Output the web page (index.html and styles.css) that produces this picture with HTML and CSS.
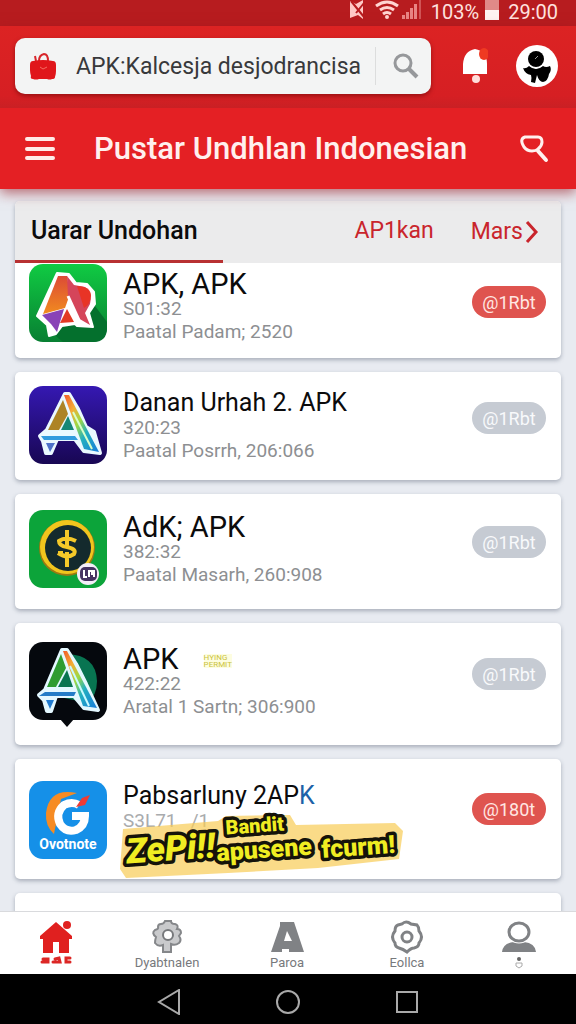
FILE: index.html
```html
<!DOCTYPE html>
<html lang="id">
<head>
    <meta charset="UTF-8">
    <meta name="viewport" content="width=device-width, initial-scale=1.0">
    <title>Pustar Undhlan Indonesian</title>
    <link rel="stylesheet" href="styles.css">
</head>
<body>
<div class="status-bar">
    <svg width="18" height="20" viewBox="0 0 18 20">
        <path d="M2 1l6 3 7-4v19l-5-4-8 3z" fill="#ffc9c6"/>
        <path d="M3 1l13 16M8 13l8-10" stroke="#b71c1f" stroke-width="2"/>
    </svg>
    <svg width="24" height="20" viewBox="0 0 24 20" fill="none" stroke="#ffd5d2" stroke-width="3">
        <path d="M1 6q11-8 22 0M5 10q7-5 14 0M8 14q4-3 8 0"/>
        <circle cx="12" cy="17" r="1" stroke-width="2"/>
    </svg>
    <svg class="signal" width="20" height="20" viewBox="0 0 20 20" fill="#e88584">
        <path d="M0 15h3v4H0zM4 12h3v7H4zM8 8h3v11H8zM12 4h3v15h-3z"/>
        <path d="M17 0h2v19h-2z" fill="#d05556"/>
    </svg>
    <span class="battery-text">103%</span>
    <svg class="battery" width="14" height="20" viewBox="0 0 14 20">
        <path d="M0 0h14v10H0z" fill="#e08a88"/>
        <path d="M0 10h14v10H0z" fill="#fff3f1"/>
    </svg>
    <span>29:00</span>
</div>

<header>
    <div class="search-row">
        <form class="search-box">
            <svg width="28" height="28" viewBox="0 0 28 28">
                <path d="M10 9q0-6 5-7 4 0 4 7M6 4l1 5" fill="none" stroke="#d8262b" stroke-width="2"/>
                <path d="M4 9q10-2 20 0 3 0 3 4v6q0 3-1 6 0 2-3 2-2 1-5 0h-8q-3 1-6 0-3 0-2-3-1-3-1-6v-5q0-4 3-4z" fill="#e0161b"/>
                <path d="M11 15l3 2 4-2" fill="none" stroke="#f46a60"/>
            </svg>
            <input type="text" aria-label="Cari aplikasi" value="APK:Kalcesja desjodrancisa">
            <button type="submit" aria-label="Cari">
                <svg width="28" height="28" viewBox="0 0 28 28" fill="none" stroke="#96989b">
                    <circle cx="11" cy="11" r="8" stroke-width="3"/>
                    <path d="M17 17l8 8" stroke-width="4"/>
                </svg>
            </button>
        </form>
        <button class="bell" aria-label="Notifikasi">
            <svg width="26" height="38" viewBox="0 0 26 38">
                <path d="M1 27V17Q2 4 13 2q12 2 12 15v10z" fill="#fff"/>
                <ellipse cx="22" cy="7" rx="5" ry="6" fill="#ef3a22"/>
                <circle cx="14" cy="32" r="4" fill="#ffdedb"/>
            </svg>
        </button>
        <button class="avatar" aria-label="Profil">
            <svg width="42" height="42" viewBox="0 0 42 42">
                <circle cx="20" cy="14" r="8"/>
                <path d="M13 21q7 6 14 0 3 2 7 0 2 4-1 8-1 7-6 8-4 0-6-7l-2 8-4-1q1-4 0-7-6-1-8-7 3 1 6-2z"/>
                <path d="M13 20q7 6 14 0" fill="none" stroke="#fff"/>
                <path d="M19 14l3-3" stroke="#999"/>
            </svg>
        </button>
    </div>
    <div class="app-bar">
        <button aria-label="Menu">
            <svg width="32" height="26" viewBox="0 0 32 26" stroke="#ffebe8" stroke-width="4" stroke-linecap="round">
                <path d="M3 3h26M3 13h26M3 22h26"/>
            </svg>
        </button>
        <h1>Pustar Undhlan Indonesian</h1>
        <button aria-label="Cari">
            <svg width="30" height="28" viewBox="0 0 30 28" fill="none" stroke="#fff0ee" stroke-width="3">
                <path d="M6 2h13q4 0 4 5 0 4-4 7-2 2-6 2-5 0-8-4Q0 4 6 2z"/>
                <path d="M19 16l8 9" stroke-width="4" stroke-linecap="round"/>
            </svg>
        </button>
    </div>
</header>

<main>
    <section class="card">
        <nav class="tabs">
            <a href="#" class="active">Uarar Undohan</a>
            <a href="#">AP1kan</a>
            <a href="#" class="more">Mars
                <svg width="14" height="24" viewBox="0 0 14 24" fill="none" stroke="#c9252c" stroke-width="3">
                    <path d="M2 2l9 10-9 10"/>
                </svg>
            </a>
        </nav>
        <div class="row first">
            <svg class="app-icon" viewBox="0 0 78 78">
                <defs>
                    <linearGradient id="green" x2="0" y2="1"><stop stop-color="#10cb43"/><stop offset="1" stop-color="#087f32"/></linearGradient>
                    <linearGradient id="orange" x2="0" y2="1"><stop stop-color="#dc4b35"/><stop offset="1" stop-color="#f18b1f"/></linearGradient>
                </defs>
                <rect width="78" height="78" rx="14" fill="url(#green)"/>
                <path d="M63 38l15 20v6q0 14-14 14H34L22 68z" fill="#04702d"/>
                <path d="M28 9l12 1 7 9 11 1 7 8 1 12-6 9 4 14-16-1-2-2-13 2-6 8-7 2-2-11L8 52z" fill="#fff" stroke="#fff" stroke-width="2" stroke-linejoin="round"/>
                <path d="M29 12h9l3 18-5 14-22 6z" fill="url(#orange)"/>
                <path d="M38 12l7 9 11 2q8 7 5 17l-5 9 5 12-12-7-10-21z" fill="#d5455a"/>
                <path d="M48 22q14 0 14 10-1 9-7 12z" fill="#e83426"/>
                <path d="M13 51l22-6-7 23-6-8z" fill="#8942b7"/>
                <path d="M38 45l7 13-14 1z" fill="#e23a25"/>
                <path d="M39 32l11 24" stroke="#fff" stroke-width="3"/>
            </svg>
            <div class="info">
                <h2>APK, APK</h2>
                <p>S01:32</p>
                <p class="meta">Paatal Padam; 2520</p>
            </div>
            <button class="price hot">@1Rbt</button>
        </div>
    </section>

    <section class="card">
        <div class="row">
            <svg class="app-icon" viewBox="0 0 78 78">
                <defs>
                    <linearGradient id="violet" x2="0" y2="1"><stop stop-color="#3518b2"/><stop offset="1" stop-color="#180753"/></linearGradient>
                    <linearGradient id="rainbow" x2="1" y2="1"><stop stop-color="#f15a2a"/><stop offset=".25" stop-color="#f5ad35"/><stop offset=".45" stop-color="#9ed943"/><stop offset=".65" stop-color="#23afc0"/><stop offset="1" stop-color="#187bda"/></linearGradient>
                </defs>
                <rect width="78" height="78" rx="14" fill="url(#violet)"/>
                <path d="M36 8h4l9 15 8 18 8 5 6 21-16-2-9-12H28l-6 14h-5l-3-12-3-5 7-6z" fill="#eaf9ff" stroke="#eaf9ff" stroke-width="4" stroke-linejoin="round"/>
                <path d="M34 14l5 14-9 16H19z" fill="#ad8425"/>
                <path d="M39 30l6 14H32z" fill="#168776"/>
                <path d="M35 9h5l10 19 20 38-15-3z" fill="url(#rainbow)"/>
                <path d="M12 50h34l3 4H15z" fill="#319cde"/>
                <path d="M17 57h9l-5 9z" fill="#4d72c9"/>
                <path d="M44 26l19 37" stroke="#d8ffca" stroke-width="2"/>
            </svg>
            <div class="info">
                <h2 class="long">Danan Urhah 2. APK</h2>
                <p>320:23</p>
                <p class="meta">Paatal Posrrh, 206:066</p>
            </div>
            <button class="price">@1Rbt</button>
        </div>
    </section>

    <section class="card">
        <div class="row tall">
            <svg class="app-icon" viewBox="0 0 78 78">
                <rect width="78" height="78" rx="14" fill="#0ca43a"/>
                <circle cx="38" cy="38" r="28" fill="#9b7912"/>
                <circle cx="38" cy="37" r="27" fill="#f1c51d"/>
                <circle cx="39" cy="38" r="23" fill="#142a2d"/>
                <path d="M47 31q-10-5-17 0 0 5 8 6 10 2 7 7-7 5-16-1M38 20v17M38 42v15" fill="none" stroke="#f4c929" stroke-width="4"/>
                <path d="M29 43h5" stroke="#f4c929" stroke-width="4"/>
                <circle cx="59" cy="64" r="11" fill="#f4eef8"/>
                <rect x="51" y="57" width="17" height="14" rx="5" fill="#463361"/>
                <path d="M55 60v7h3M60 67v-6h5v6M63 61v4" fill="none" stroke="#fff" stroke-width="2"/>
            </svg>
            <div class="info">
                <h2>AdK; APK</h2>
                <p>382:32</p>
                <p class="meta">Paatal Masarh, 260:908</p>
            </div>
            <button class="price">@1Rbt</button>
        </div>
    </section>

    <section class="card">
        <div class="row taller">
            <svg class="app-icon" viewBox="0 0 78 78">
                <rect width="78" height="78" rx="14" fill="#05080d"/>
                <path d="M31 77h14l-7 8z" fill="#05080d"/>
                <path d="M38 12q29 1 30 27 0 15-10 22L31 55z" fill="#087451"/>
                <path d="M33 8h5l9 14 10 20 12 26-14-2-10-12H27l-5 15h-4l-3-11-5-5 6-5z" fill="#e4f8ff" stroke="#e4f8ff" stroke-width="4" stroke-linejoin="round"/>
                <path d="M32 12l5 14-10 19h-9z" fill="#2e9c31"/>
                <path d="M38 28l6 17H29z" fill="#087451"/>
                <path d="M34 9h4l10 19 20 38-14-2z" fill="url(#rainbow)"/>
                <path d="M10 54h35l2-4H16z" fill="#247cc7"/>
                <path d="M17 58h8l-4 9z" fill="#227bcf"/>
                <path d="M41 24l19 40" stroke="#c9faff" stroke-width="2"/>
            </svg>
            <div class="info">
                <h2>APK <span class="tag">HYING<br>PERMIT</span></h2>
                <p>422:22</p>
                <p class="meta">Aratal 1 Sartn; 306:900</p>
            </div>
            <button class="price">@1Rbt</button>
        </div>
    </section>

    <section class="card">
        <div class="row promo">
            <svg class="app-icon" viewBox="0 0 78 78">
                <rect width="78" height="78" rx="14" fill="#1590e8"/>
                <path d="M48 12Q20 6 17 32q-1 13 8 21l7-35z" fill="#f68b23"/>
                <path d="M50 24q-7-4-15 0-9 8-4 19 6 9 16 6 9-4 9-14H43" fill="none" stroke="#fff" stroke-width="8"/>
                <path d="M47 26l6-9 8-3-5 10z" fill="#ee3b35"/>
                <text x="39" y="68" class="icon-text">Ovotnote</text>
            </svg>
            <div class="info">
                <h2 class="long">Pabsarluny 2AP<span class="blue">K</span></h2>
                <p class="faded">S3L71 &nbsp; /1</p>
            </div>
            <button class="price hot">@180t</button>
            <svg class="sticker" width="290" height="70" viewBox="0 0 290 70">
                <path d="M5 18l95-8 8-5 64-1 6 10 99-2 8 8-4 28-81 9-90 5-102 5-6-9z" fill="#f8cc55" opacity=".7"/>
                <g transform="rotate(-4 145 35)">
                    <text x="8" y="43" class="big">ZePi!!</text>
                    <text x="109" y="21" class="small">Bandit</text>
                    <text x="98" y="47" class="mid">apusene</text>
                    <text x="203" y="51" class="mid">fcurm!</text>
                </g>
            </svg>
        </div>
    </section>

    <section class="card next"></section>
</main>

<nav class="bottom-nav">
    <a href="#" aria-label="Beranda">
        <svg width="34" height="34" viewBox="0 0 34 34" fill="#e0201f">
            <path d="M17 2L1 16v3h3v14h10V22h6v11h10V19h3v-3z"/>
            <circle cx="28" cy="5" r="4"/>
        </svg>
        <svg width="32" height="10" viewBox="0 0 32 10" fill="none" stroke="#dc2725" stroke-width="3" stroke-linecap="round">
            <path d="M2 7h6V4H3M13 7h7l-1-4-4 1M30 3h-4v4h4"/>
        </svg>
    </a>
    <a href="#">
        <svg width="34" height="34" viewBox="0 0 34 34">
            <path d="M11 4q3 0 4-3h6q0 3 4 3 4 1 2 5 4 0 4 4l-2 3q3 4 0 7-4 3-8 1v8H13v-7q-5 2-8-2 0-3 1-6-5-4-1-7 4-1 3-3 0-3 3-3z" fill="#c9cacc" stroke="#85878a" stroke-width="2"/>
            <circle cx="18" cy="15" r="5" fill="#fff" stroke="#77797c" stroke-width="2"/>
        </svg>
        Dyabtnalen
    </a>
    <a href="#">
        <svg width="34" height="34" viewBox="0 0 34 34">
            <path d="M10 2h14l10 30H19v-3h-7v3H1L10 6z" fill="#808285"/>
            <path d="M17 11l5 10h-8z" fill="#fff"/>
        </svg>
        Paroa
    </a>
    <a href="#">
        <svg width="34" height="34" viewBox="0 0 34 34" fill="none" stroke="#808285" stroke-width="3">
            <path d="M12 4q4-4 9 0l6 1q2 2 2 6 5 6 0 12 0 4-5 5-3 0-7 4-4-3-8-4-4-1-4-5-5-6 0-12 0-5 3-6z"/>
            <circle cx="17" cy="17" r="5"/>
        </svg>
        Eollca
    </a>
    <a href="#" aria-label="Akun">
        <svg width="36" height="34" viewBox="0 0 36 34">
            <path d="M1 32q1-9 12-10h10q11 1 12 10z" fill="#808285"/>
            <ellipse cx="18" cy="12" rx="11" ry="10" fill="#fff" stroke="#fff" stroke-width="3"/>
            <ellipse cx="18" cy="12" rx="10" ry="9" fill="#fff" stroke="#808285" stroke-width="3"/>
        </svg>
        <svg width="12" height="14" viewBox="0 0 12 14">
            <circle cx="6" cy="4" r="2" fill="#666"/>
            <path d="M3 8h6v3l-3 2-3-2z" fill="none" stroke="#aaa"/>
        </svg>
    </a>
</nav>

<div class="system-nav">
    <button aria-label="Kembali">
        <svg width="24" height="26" viewBox="0 0 24 26"><path d="M22 1v24L2 13z"/></svg>
    </button>
    <button aria-label="Layar utama">
        <svg width="24" height="26" viewBox="0 0 24 26"><circle cx="12" cy="13" r="11"/></svg>
    </button>
    <button aria-label="Aplikasi terbaru">
        <svg width="24" height="26" viewBox="0 0 24 26"><path d="M2 3h20v20H2z"/></svg>
    </button>
</div>
</body>
</html>
```
FILE: styles.css
```css
* {
    box-sizing: border-box;
}

body {
    display: flex;
    flex-direction: column;
    height: 100vh;
    margin: 0;
    font-family: Roboto, Arial, sans-serif;
    color: #0b0b0c;
    background: #e8ebf1;
    overflow: hidden;
}

h1, h2, p {
    margin: 0;
    font-weight: 400;
}

a {
    color: inherit;
    text-decoration: none;
}

button {
    flex: none;
    padding: 0;
    border: 0;
    background: none;
    font-family: inherit;
}

svg {
    display: block;
    flex: none;
}

.status-bar {
    display: flex;
    align-items: flex-start;
    height: 26px;
    padding-right: 18px;
    justify-content: flex-end;
    gap: 9px;
    color: #ffe2df;
    background: #b71c1f;
    font-size: 20px;
    line-height: 24px;
}

.status-bar .signal {
    margin-left: -6px;
}

.status-bar .battery {
    margin-left: -3px;
}

header {
    position: relative;
    background: #e42024;
    box-shadow: 0 4px 12px rgba(150, 20, 30, 0.6);
}

.search-row {
    display: flex;
    align-items: center;
    height: 82px;
    padding: 0 18px 2px 15px;
    background: linear-gradient(#dc2323 0, #d61f23 85%, #c92024 100%);
}

.search-box {
    display: flex;
    flex: 1;
    align-items: center;
    min-width: 0;
    height: 56px;
    padding-left: 14px;
    border-radius: 10px;
    background: #f3f4f4;
    box-shadow: 0 2px 4px rgba(90, 0, 0, 0.5);
}

.search-box input {
    flex: 1;
    min-width: 0;
    padding: 0;
    margin-left: 19px;
    border: 0;
    outline: 0;
    background: none;
    color: #38393b;
    font-family: inherit;
    font-size: 23px;
}

.search-box button {
    display: flex;
    width: 56px;
    height: 38px;
    padding-left: 16px;
    align-items: center;
    border-left: 1px solid #dcdddd;
}

.bell {
    margin: 0 28px 0 31px;
}

.avatar {
    width: 42px;
    height: 42px;
    border-radius: 50%;
    background: #fff;
}

.app-bar {
    display: flex;
    align-items: center;
    height: 81px;
    padding: 0 27px 0 24px;
}

.app-bar h1 {
    flex: 1;
    margin-left: 38px;
    color: #fff0ee;
    font-size: 31px;
    font-weight: 500;
    line-height: 40px;
    white-space: nowrap;
}

main {
    display: flex;
    flex: 1;
    flex-direction: column;
    gap: 14px;
    min-height: 0;
    padding: 12px 15px 0;
    overflow: hidden;
}

.card {
    flex: none;
    border-radius: 5px;
    background: #fff;
    box-shadow: 0 2px 4px rgba(70, 80, 100, 0.4);
}

.next {
    height: 40px;
}

.tabs {
    display: flex;
    height: 62px;
    border-radius: 5px 5px 0 0;
    background: #ebebec;
    color: #c9252c;
    font-size: 23px;
    line-height: 60px;
}

.tabs a {
    margin-right: 37px;
}

.tabs .active {
    width: 208px;
    margin-right: auto;
    padding-left: 16px;
    border-bottom: 3px solid #b83132;
    color: #0b0b0c;
    font-size: 25px;
    font-weight: 500;
}

.tabs .more {
    display: flex;
    align-items: center;
    gap: 2px;
    margin-right: 22px;
}

.row {
    position: relative;
    display: flex;
    align-items: flex-start;
    padding: 14px 15px 16px 14px;
}

.first {
    padding-top: 1px;
    padding-bottom: 13px;
}

.tall {
    padding-top: 16px;
    padding-bottom: 21px;
}

.taller {
    padding-top: 19px;
    padding-bottom: 25px;
}

.promo {
    padding-top: 22px;
    padding-bottom: 20px;
}

.app-icon {
    width: 78px;
    height: 78px;
    overflow: visible;
}

.icon-text {
    fill: #fff;
    font-size: 14px;
    font-weight: 700;
    text-anchor: middle;
}

.info {
    flex: 1;
    padding: 2px 0 0 16px;
    color: #8d8f92;
    font-size: 19px;
    line-height: 20px;
    white-space: nowrap;
}

.first .info {
    padding-top: 5px;
}

.promo .info {
    padding-top: 0;
}

.info h2 {
    color: #0b0b0c;
    font-size: 29px;
    line-height: 30px;
}

.info .long {
    font-size: 25px;
}

.info .meta {
    line-height: 26px;
}

.info .faded {
    color: #a9abad;
}

.blue {
    color: #1c62a8;
}

.tag {
    display: inline-block;
    margin-left: 18px;
    color: #cbc33c;
    background: #fdfde0;
    font-size: 8px;
    line-height: 7px;
    vertical-align: middle;
}

.price {
    width: 74px;
    height: 32px;
    margin-top: 16px;
    border-radius: 16px;
    background: #c6cbd3;
    color: #f8f9fb;
    font-size: 18px;
}

.first .price {
    margin-top: 22px;
}

.promo .price {
    margin-top: 12px;
}

.hot {
    background: #df544f;
    color: #ffe6e2;
}

.sticker {
    position: absolute;
    left: 103px;
    top: 52px;
}

.sticker text {
    fill: #f0ed22;
    stroke: #15130a;
    stroke-width: 7px;
    stroke-linejoin: round;
    paint-order: stroke;
    font-family: Roboto, sans-serif;
    font-weight: 900;
}

.sticker .big {
    font-size: 35px;
    font-style: italic;
}

.sticker .small {
    font-size: 20px;
}

.sticker .mid {
    font-size: 25px;
}

.bottom-nav {
    display: grid;
    grid-template-columns: 112fr 110fr 130fr 110fr 114fr;
    height: 63px;
    padding-top: 8px;
    border-top: 1px solid #d9dadd;
    background: #fff;
    color: #77797c;
    font-size: 13px;
    line-height: 15px;
}

.bottom-nav a {
    display: flex;
    flex-direction: column;
    align-items: center;
    gap: 1px;
}

.system-nav {
    display: flex;
    align-items: center;
    justify-content: center;
    gap: 95px;
    height: 50px;
    padding-top: 5px;
    background: #000;
}

.system-nav svg {
    fill: none;
    stroke: #a9a9a9;
    stroke-width: 2px;
}
```
